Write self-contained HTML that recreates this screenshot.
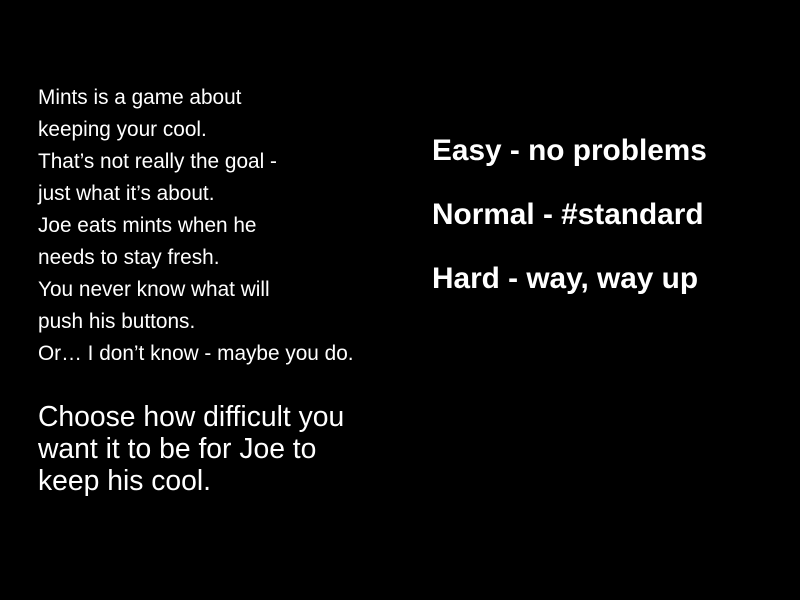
<!DOCTYPE html>
<html><head><meta charset="utf-8"><style>
html,body{margin:0;padding:0;background:#000;width:800px;height:600px;overflow:hidden}
body{position:relative;color:#fff;font-family:"Liberation Sans",sans-serif}
.l{position:absolute;left:38px;white-space:nowrap}
.a{font-size:20.8px;line-height:32px}
.b{font-size:28.3px;line-height:32px}
.r{position:absolute;left:432px;font-size:29.8px;font-weight:bold;line-height:40px;white-space:nowrap}
</style></head><body>
<div class="l a" style="top:82px">Mints is a game about</div>
<div class="l a" style="top:114px">keeping your cool.</div>
<div class="l a" style="top:146px">That’s not really the goal -</div>
<div class="l a" style="top:178px">just what it’s about.</div>
<div class="l a" style="top:210px">Joe eats mints when he</div>
<div class="l a" style="top:242px">needs to stay fresh.</div>
<div class="l a" style="top:274px">You never know what will</div>
<div class="l a" style="top:306px">push his buttons.</div>
<div class="l a" style="top:338px">Or… I don’t know - maybe you do.</div>
<div class="l b" style="top:400px">Choose how difficult you</div>
<div class="l b" style="top:432px">want it to be for Joe to</div>
<div class="l b" style="top:464px">keep his cool.</div>
<div class="r" style="top:131px">Easy - no problems</div>
<div class="r" style="top:195px">Normal - #standard</div>
<div class="r" style="top:259px">Hard - way, way up</div>
</body></html>
